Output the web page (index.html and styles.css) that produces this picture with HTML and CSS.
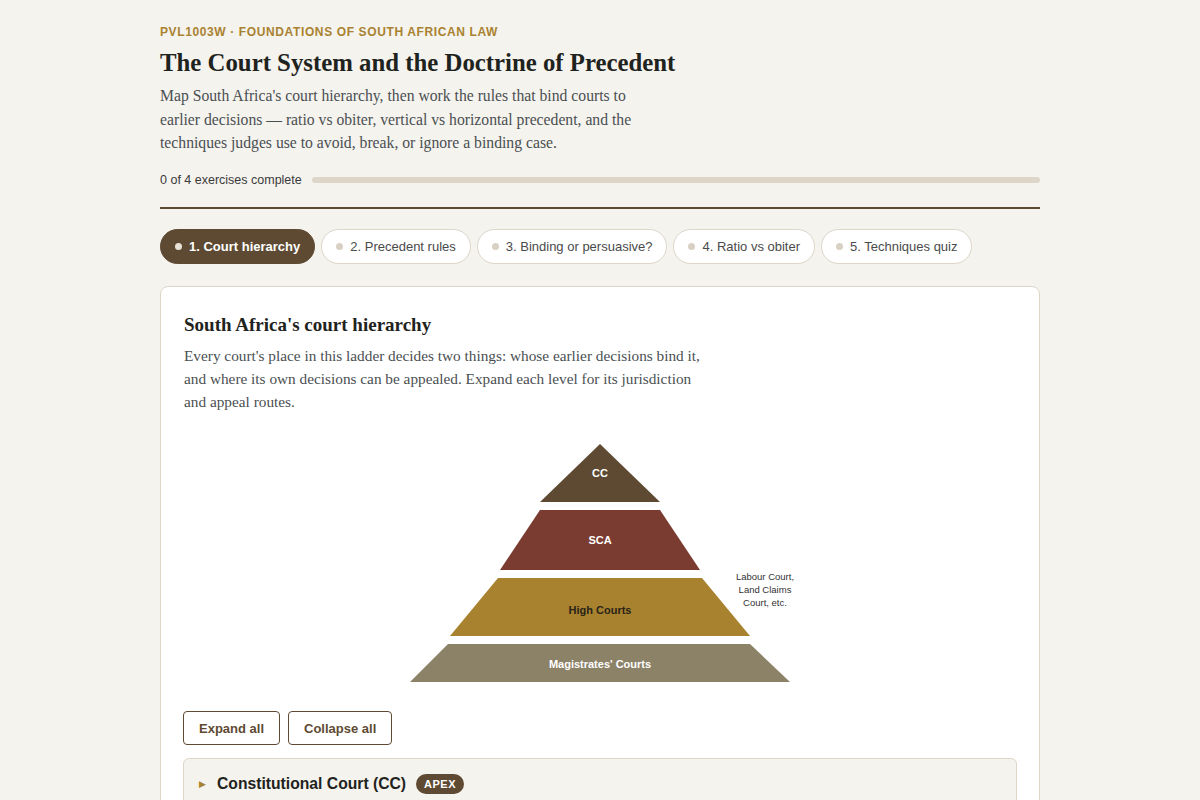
FILE: index.html
```html
<!DOCTYPE html>
<html lang="en">
<head>
<meta charset="utf-8">
<title>The Court System and the Doctrine of Precedent</title>
<link rel="stylesheet" href="styles.css">
</head>
<body>
<main class="page">
  <header class="head">
    <div class="eyebrow">PVL1003W · FOUNDATIONS OF SOUTH AFRICAN LAW</div>
    <h1 class="title">The Court System and the Doctrine of Precedent</h1>
    <p class="lede">Map South Africa's court hierarchy, then work the rules that bind courts to earlier decisions — ratio vs obiter, vertical vs horizontal precedent, and the techniques judges use to avoid, break, or ignore a binding case.</p>
    <div class="progress">
      <span class="progress-label">0 of 4 exercises complete</span>
      <div class="progress-track"><div class="progress-fill" style="width:0%"></div></div>
    </div>
  </header>

  <nav class="tabs">
    <button class="tab active"><span class="dot"></span>1. Court hierarchy</button>
    <button class="tab"><span class="dot"></span>2. Precedent rules</button>
    <button class="tab"><span class="dot"></span>3. Binding or persuasive?</button>
    <button class="tab"><span class="dot"></span>4. Ratio vs obiter</button>
    <button class="tab"><span class="dot"></span>5. Techniques quiz</button>
  </nav>

  <section class="card">
    <h2 class="card-title">South Africa's court hierarchy</h2>
    <p class="card-desc">Every court's place in this ladder decides two things: whose earlier decisions bind it, and where its own decisions can be appealed. Expand each level for its jurisdiction and appeal routes.</p>

    <div class="pyramid-wrap">
      <svg class="pyramid" width="420" height="250" viewBox="390 436 420 250" xmlns="http://www.w3.org/2000/svg">
        <polygon points="600,444 660,502 540,502" fill="#5e4a33"/>
        <text x="600" y="477" class="lvl lvl-light">CC</text>
        <polygon points="540,510 660,510 700,570 500,570" fill="#7a3b30"/>
        <text x="600" y="544" class="lvl lvl-light">SCA</text>
        <polygon points="498,578 702,578 750,636 450,636" fill="#a98230"/>
        <text x="600" y="614" class="lvl lvl-dark">High Courts</text>
        <polygon points="448,644 750,644 790,682 410,682" fill="#8c8268"/>
        <text x="600" y="668" class="lvl lvl-light">Magistrates' Courts</text>
        <text x="765" y="580" class="side">Labour Court,</text>
        <text x="765" y="593" class="side">Land Claims</text>
        <text x="765" y="606" class="side">Court, etc.</text>
      </svg>
    </div>

    <div class="actions">
      <button class="btn">Expand all</button>
      <button class="btn">Collapse all</button>
    </div>

    <div class="acc">
      <div class="acc-head">
        <span class="caret">▶</span>
        <span class="acc-title">Constitutional Court (CC)</span>
        <span class="badge">APEX</span>
      </div>
    </div>
  </section>
</main>
</body>
</html>
```

FILE: styles.css
```css
* { box-sizing: border-box; }
html, body { margin: 0; padding: 0; }
body {
  background: #f5f3ee;
  font-family: "Liberation Sans", Arial, sans-serif;
  color: #222;
}
.page {
  width: 880px;
  margin: 0 auto;
  padding-top: 24px;
}
.eyebrow {
  font-size: 12px;
  font-weight: 700;
  letter-spacing: 0.62px;
  color: #a98230;
  line-height: 16px;
}
.title {
  font-family: "Liberation Serif", "Times New Roman", serif;
  font-size: 24.8px;
  font-weight: 700;
  color: #1f2320;
  margin: 7px 0 0;
  line-height: 32px;
}
.lede {
  font-family: "Liberation Serif", "Times New Roman", serif;
  font-size: 15.7px;
  line-height: 23.5px;
  color: #4a4f52;
  margin: 5px 0 0;
  max-width: 490px;
}
.progress {
  display: flex;
  align-items: center;
  gap: 10px;
  margin-top: 18px;
}
.progress-label {
  font-size: 12.5px;
  color: #3a3a3a;
  white-space: nowrap;
}
.progress-track {
  flex: 1;
  height: 6px;
  border-radius: 3px;
  background: #ddd6c8;
  overflow: hidden;
}
.progress-fill { height: 100%; background: #5e4a33; }

.head {
  padding-bottom: 20px;
  border-bottom: 2px solid #5e4a33;
}

.tabs {
  display: flex;
  gap: 6px;
  margin-top: 20px;
}
.tab {
  font-family: "Liberation Sans", Arial, sans-serif;
  font-size: 13px;
  height: 35px;
  padding: 0 14px;
  border-radius: 18px;
  border: 1px solid #ddd6c8;
  background: #fff;
  color: #4a4a4a;
  display: flex;
  align-items: center;
  gap: 7px;
  cursor: pointer;
}
.tab .dot {
  width: 7px; height: 7px;
  border-radius: 50%;
  background: #d8d1c3;
}
.tab.active {
  background: #5e4a33;
  border-color: #5e4a33;
  color: #fff;
  font-weight: 700;
}
.tab.active .dot { background: #e8e2d6; }

.card {
  margin-top: 22px;
  background: #fff;
  border: 1px solid #ddd6c8;
  border-radius: 8px;
  padding: 26px 23px 0;
  min-height: 560px;
}
.card-title {
  font-family: "Liberation Serif", "Times New Roman", serif;
  font-size: 19px;
  font-weight: 700;
  color: #1f2320;
  margin: 0;
  line-height: 24px;
}
.card-desc {
  font-family: "Liberation Serif", "Times New Roman", serif;
  font-size: 15.3px;
  line-height: 23.3px;
  color: #4a4f52;
  margin: 7px 0 0;
  max-width: 525px;
}
.pyramid-wrap {
  display: flex;
  justify-content: center;
  margin-top: 23px;
}
.pyramid { display: block; }
.lvl {
  font-family: "Liberation Sans", Arial, sans-serif;
  font-size: 11px;
  font-weight: 700;
  text-anchor: middle;
}
.lvl-light { fill: #fff; }
.lvl-dark { fill: #2a2418; }
.side {
  font-family: "Liberation Sans", Arial, sans-serif;
  font-size: 9.5px;
  fill: #333;
  text-anchor: middle;
}
.actions {
  display: flex;
  gap: 8px;
  margin-top: 25px;
  margin-left: -1px;
}
.btn {
  font-family: "Liberation Sans", Arial, sans-serif;
  font-size: 13px;
  font-weight: 700;
  color: #5e4a33;
  background: #fff;
  border: 1px solid #5e4a33;
  border-radius: 4px;
  height: 34px;
  padding: 0 15px 0 15px;
  cursor: pointer;
}
.acc {
  margin-top: 13px;
  margin-left: -1px;
  margin-right: -1px;
  background: #f5f3ee;
  border: 1px solid #ddd6c8;
  border-radius: 6px;
}
.acc-head {
  display: flex;
  align-items: center;
  padding: 15px 15px 14px;
}
.caret {
  font-size: 9px;
  color: #a98230;
  width: 18px;
}
.acc-title {
  font-size: 15.7px;
  font-weight: 700;
  color: #1f2320;
}
.badge {
  margin-left: 10px;
  background: #5e4a33;
  color: #fff;
  font-size: 11px;
  font-weight: 700;
  letter-spacing: 0.5px;
  padding: 4px 8px;
  border-radius: 10px;
}
```
